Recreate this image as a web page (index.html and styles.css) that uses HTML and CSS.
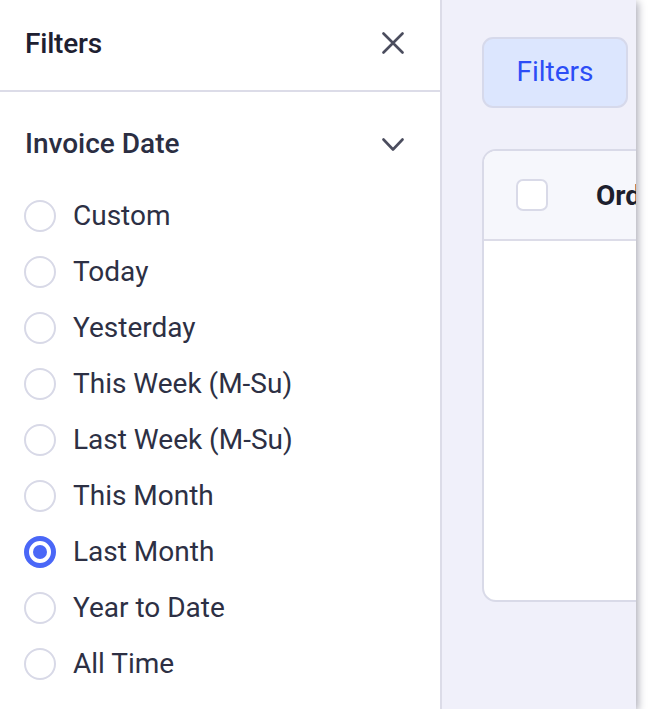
FILE: index.html
```html
<!DOCTYPE html>
<html lang="en">
<head>
<meta charset="utf-8">
<title>Invoices – Filters</title>
<link rel="stylesheet" href="styles.css">
</head>
<body>
<div class="window">
  <aside class="sidebar">
    <header class="sidebar-head">
      <h1 class="sidebar-title">Filters</h1>
      <button class="icon-btn" aria-label="Close">
        <svg width="22" height="22" viewBox="0 0 22 22"><path d="M1.5 1.5 L20.5 20.5 M20.5 1.5 L1.5 20.5" stroke="#4b4d5e" stroke-width="2.6" stroke-linecap="round" fill="none"/></svg>
      </button>
    </header>
    <section class="filter-group">
      <div class="group-head">
        <h2 class="group-title">Invoice Date</h2>
        <svg class="chevron" width="22" height="14" viewBox="0 0 22 14"><path d="M1.5 1.5 L11 11.5 L20.5 1.5" stroke="#4b4d5e" stroke-width="2.6" stroke-linecap="round" stroke-linejoin="round" fill="none"/></svg>
      </div>
      <ul class="options">
        <li class="option"><span class="radio"></span><span class="label">Custom</span></li>
        <li class="option"><span class="radio"></span><span class="label">Today</span></li>
        <li class="option"><span class="radio"></span><span class="label">Yesterday</span></li>
        <li class="option"><span class="radio"></span><span class="label">This Week (M-Su)</span></li>
        <li class="option"><span class="radio"></span><span class="label">Last Week (M-Su)</span></li>
        <li class="option"><span class="radio"></span><span class="label">This Month</span></li>
        <li class="option"><span class="radio radio-on"></span><span class="label">Last Month</span></li>
        <li class="option"><span class="radio"></span><span class="label">Year to Date</span></li>
        <li class="option"><span class="radio"></span><span class="label">All Time</span></li>
      </ul>
    </section>
  </aside>
  <main class="main">
    <button class="filter-btn">Filters</button>
    <div class="card">
      <div class="card-head">
        <span class="checkbox"></span>
        <span class="col-title">Order #</span>
      </div>
    </div>
  </main>
</div>
</body>
</html>
```
FILE: styles.css
```css
* { box-sizing: border-box; }

html, body {
  margin: 0;
  padding: 0;
  background: #ffffff;
  font-family: Roboto, "Liberation Sans", Arial, sans-serif;
}

.window {
  width: 636px;
  height: 709px;
  display: flex;
  overflow: hidden;
  background: #f0f0fa;
  box-shadow: 2px 2px 8px rgba(40, 40, 70, 0.4);
}

/* Side panel */
.sidebar {
  width: 442px;
  flex: none;
  background: #ffffff;
  border-right: 2px solid #dcdce8;
  display: flex;
  flex-direction: column;
}

.sidebar-head {
  height: 92px;
  flex: none;
  border-bottom: 2px solid #dcdce8;
  display: flex;
  align-items: center;
  justify-content: space-between;
  padding: 0 36px 4px 25px;
}

.sidebar-title {
  margin: 0;
  font-size: 28px;
  font-weight: 500;
  color: #1e2031;
  letter-spacing: -0.2px;
}

.icon-btn {
  width: 22px;
  height: 22px;
  padding: 0;
  border: 0;
  background: none;
  display: flex;
}

.filter-group {
  padding: 23px 36px 0 24px;
}

.group-head {
  height: 56px;
  display: flex;
  align-items: center;
  justify-content: space-between;
}

.group-title {
  margin: 0 0 0 1px;
  font-size: 28px;
  font-weight: 500;
  color: #2b2e42;
}

.chevron { margin-top: 3px; }

.options {
  list-style: none;
  margin: 17px 0 0;
  padding: 0;
}

.option {
  height: 56px;
  display: flex;
  align-items: center;
  gap: 17px;
}

.radio {
  width: 32px;
  height: 32px;
  flex: none;
  border-radius: 50%;
  border: 2px solid #d8d9e7;
  background: #ffffff;
  display: flex;
  align-items: center;
  justify-content: center;
}

.radio-on {
  border: 5px solid #4a67f7;
}

.radio-on::after {
  content: "";
  width: 14px;
  height: 14px;
  border-radius: 50%;
  background: #4a67f7;
}

.label {
  font-size: 28px;
  color: #2d3044;
  margin-top: -1px;
}

/* Content area */
.main {
  flex: 1;
  min-width: 0;
  padding: 37px 0 0 40px;
  display: flex;
  flex-direction: column;
  align-items: flex-start;
}

.filter-btn {
  width: 146px;
  height: 71px;
  border: 2px solid #d6d9eb;
  border-radius: 11px;
  background: #dce6fe;
  color: #2c4df6;
  font-family: inherit;
  font-size: 28px;
  padding: 0 0 2px;
}

.card {
  margin-top: 41px;
  width: 320px;
  height: 453px;
  flex: none;
  background: #ffffff;
  border: 2px solid #d9dae8;
  border-radius: 14px;
  overflow: hidden;
}

.card-head {
  height: 90px;
  background: #f6f7fc;
  border-bottom: 2px solid #dcdce8;
  display: flex;
  align-items: center;
  padding-left: 32px;
  gap: 48px;
  white-space: nowrap;
}

.checkbox {
  width: 32px;
  height: 32px;
  flex: none;
  border: 2px solid #d9dae8;
  border-radius: 7px;
  background: #ffffff;
}

.col-title {
  font-size: 28px;
  font-weight: 700;
  color: #1d1f2e;
}
```
